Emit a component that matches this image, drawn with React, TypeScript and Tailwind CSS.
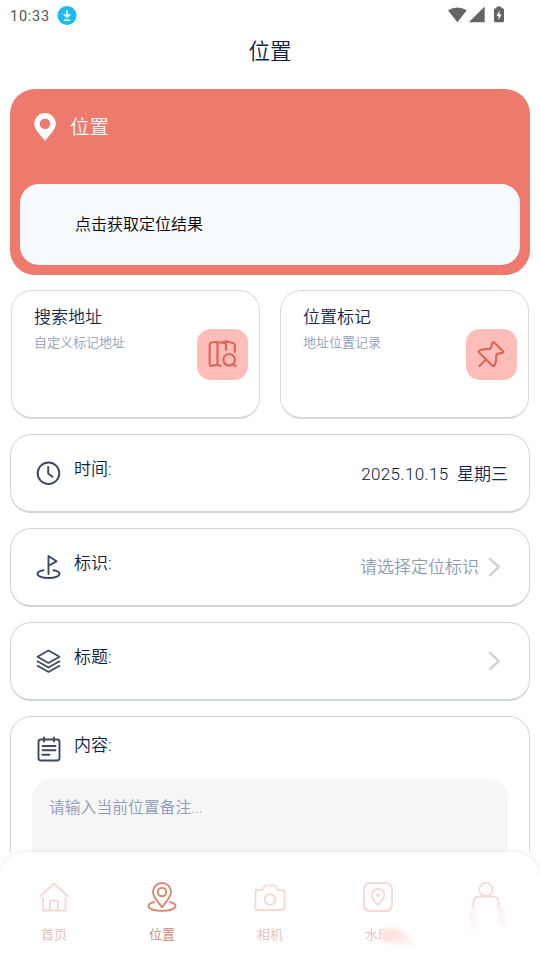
import type { ReactNode } from "react";

function StatusBar() {
  return (
    <div className="flex h-8 items-center justify-between pl-[10px] pr-[34px] text-[#545454]">
      <div className="flex items-center gap-[7px]">
        <span className="mt-[1px] font-['Roboto',sans-serif] text-[14.5px] font-normal leading-8 tracking-[0.750px]">
          10:33
        </span>
        <svg className="h-[20px] w-[20px]" viewBox="0 0 20 20" fill="none">
          <circle cx="10" cy="9.5" r="9.5" fill="#19baf5" />
          <path d="M10 4v7M6.700 8 10 11.300l3.300-3.300M6.800 14.200h6.400" stroke="#fff" strokeWidth="1.600" />
        </svg>
      </div>
      <svg className="-mt-[2px] h-[18px] w-[60px]" viewBox="0 0 60 18" fill="#646464">
        <path d="M2 4.300Q11.300-1.200 20.800 4.300L11.400 16.300Z" />
        <path d="M38.700.500v15.700H22.800Z" />
        <path
          fillRule="evenodd"
          d="M50.500.400h4.800v1.800h1.200q1.500 0 1.500 1.500v11.100q0 1.500-1.500 1.500h-7q-1.500 0-1.500-1.500V3.700q0-1.500 1.500-1.500h1Zm3 4-3 5.600h2v4l3-5.500h-2Z"
        />
      </svg>
    </div>
  );
}

interface FeatureProps {
  title: string;
  desc: string;
  icon: ReactNode;
}

function FeatureCard({ title, desc, icon }: FeatureProps) {
  return (
    <div className="flex h-[129px] w-[249px] justify-between rounded-[21px] border border-b-2 border-[#d6d9e0] pl-[22px] pr-[11px]">
      <div className="pt-[13px]">
        <p className="text-[17px] leading-[26px] text-[#14284c]">{title}</p>
        <p className="text-[13px] leading-[26px] text-[#8b9cba]">{desc}</p>
      </div>
      <div className="mt-[38px] flex h-[51px] w-[51px] items-center justify-center rounded-[14px] bg-[#ffbdb9]">
        {icon}
      </div>
    </div>
  );
}

interface RowProps {
  label: string;
  icon: ReactNode;
  children?: ReactNode;
}

function Row({ label, icon, children }: RowProps) {
  return (
    <div className="flex h-[79px] items-center rounded-[21px] border border-b-2 border-[#d0d4dc] pl-[24px] pr-[21px]">
      <div className="h-7 w-7">{icon}</div>
      <p className="mb-[9px] ml-[11px] flex-1 text-[17px] leading-6 text-[#0c1f42]">{label}</p>
      {children}
    </div>
  );
}

function Chevron() {
  return (
    <svg className="ml-[9px] mr-[7px] h-[20px] w-[13px]" viewBox="0 0 13 20" fill="none" stroke="#d2d2d2" strokeWidth="2.500" strokeLinecap="round" strokeLinejoin="round">
      <path d="m2 1.800 8.800 8.200L2 18.200" />
    </svg>
  );
}

const rowSvg = {
  className: "h-7 w-7",
  viewBox: "0 0 28 28",
  fill: "none",
  stroke: "#3c4962",
  strokeWidth: 1.9,
  strokeLinecap: "round",
  strokeLinejoin: "round",
} as const;

const tabSvg = {
  className: "h-8 w-8",
  viewBox: "0 0 32 32",
  fill: "none",
  stroke: "currentColor",
  strokeLinecap: "round",
  strokeLinejoin: "round",
} as const;

const tabs = [
  {
    name: "首页",
    active: false,
    icon: (
      <svg {...tabSvg} strokeWidth="1.800">
        <path d="M2 15.500 16 2.500l14 13M5 17v11.500q0 1 1 1h20.500q1 0 1-1V17M12 29V21q0-1.500 1.500-1.500h5q1.500 0 1.500 1.500v8" />
      </svg>
    ),
  },
  {
    name: "位置",
    active: true,
    icon: (
      <svg {...tabSvg} strokeWidth="1.900">
        <path d="M16 26.500C12 20.500 7 16.300 7 11a9 9 0 0 1 18 0c0 5.300-5 9.500-9 15.500Z" />
        <circle cx="16" cy="11" r="4.200" />
        <path d="M8 21c-3.500.900-5.500 2.200-5.500 3.900C2.500 27.800 8 29.900 16 29.900s13.500-2.100 13.500-5c0-1.700-2-3-5.500-3.900" />
      </svg>
    ),
  },
  {
    name: "相机",
    active: false,
    icon: (
      <svg {...tabSvg} strokeWidth="1.800">
        <path d="M3 9H7.500q1.200 0 1.600-1l1.100-2.700q.4-1 1.500-1h8.600q1.100 0 1.500 1L22.900 8q.4 1 1.600 1H29q1.500 0 1.500 1.500v17q0 1.500-1.500 1.500H3q-1.500 0-1.500-1.500v-17Q1.500 9 3 9Z" />
        <circle cx="16" cy="18.500" r="5.300" />
      </svg>
    ),
  },
  {
    name: "水印",
    active: false,
    icon: (
      <svg {...tabSvg} strokeWidth="1.800">
        <rect x="2" y="2" width="28" height="28" rx="6" />
        <path d="M16 24c-3-3.300-6.300-6.200-6.300-9.800a6.300 6.300 0 0 1 12.600 0C22.300 17.800 19 20.700 16 24Z" />
        <circle cx="16" cy="14.200" r="1" fill="currentColor" />
      </svg>
    ),
  },
  {
    name: "",
    active: false,
    icon: (
      <svg {...tabSvg} strokeWidth="1.800">
        <circle cx="16" cy="8.500" r="6.700" />
        <path d="M3.500 26v-4.500q0-6 6-6h13q6 0 6 6V26" />
      </svg>
    ),
  },
];

function TabBar() {
  return (
    <nav className="relative flex h-[108px] rounded-t-[26px] bg-white pt-[29px] shadow-[0_0_5px_rgba(0,0,0,0.09)]">
      {tabs.map((tab, i) => (
        <div
          key={i}
          className={`flex flex-1 flex-col items-center ${tab.active ? "text-[#d98672]" : "text-[#f3d8d3]"}`}
        >
          {tab.icon}
          <span className={`mt-[12px] text-[13px] leading-5 ${tab.active ? "text-[#cf7f70]" : "text-[#e9bcb5]"}`}>
            {tab.name}
          </span>
        </div>
      ))}
      {/* soft smudge over the right side of the bar */}
      <svg className="absolute left-[370px] top-[28px] h-[80px] w-[160px]" viewBox="0 0 160 80">
        <defs>
          <filter id="soft" x="-50%" y="-50%" width="200%" height="200%">
            <feGaussianBlur stdDeviation="2" />
          </filter>
          <linearGradient id="smudge" x1="0" x2="1" y1="0" y2="0.500">
            <stop offset="0" stopColor="#fbdad3" />
            <stop offset="1" stopColor="#fdf1ef" />
          </linearGradient>
          <linearGradient id="streak" x1="0" x2="0" y1="0" y2="1">
            <stop offset="0" stopColor="#f9eae7" />
            <stop offset="1" stopColor="#ffffff" />
          </linearGradient>
        </defs>
        <path d="M22 35 34 26v44H15V48Z" fill="#fff" filter="url(#soft)" />
        <path d="M12 50Q22 47 32 51L46 64Q30 66 12 61Z" fill="url(#smudge)" filter="url(#soft)" />
        <path d="M101 28h4v28h-5ZM128 28h5l2 20h-5Z" fill="url(#streak)" filter="url(#soft)" />
      </svg>
    </nav>
  );
}

export default function App() {
  return (
    <div className="flex h-[960px] w-[540px] flex-col overflow-hidden bg-white font-['Roboto','Noto_Sans_CJK_SC',sans-serif] font-[350]">
      <main className="h-[852px] overflow-hidden">
        <StatusBar />
        <h1 className="h-[57px] text-center text-[21.500px] leading-[40px] text-[#0c1f42]">位置</h1>

        <section className="mx-[10px] h-[186px] rounded-[25px] bg-[#ee796d] px-[10px] pt-[19px]">
          <div className="flex h-[38px] items-center pl-[14px]">
            <svg className="h-7 w-[22px]" viewBox="0 0 22 28" fill="#fff">
              <path fillRule="evenodd" d="M11 0a10.800 10.800 0 0 1 10.800 10.800C21.800 17 15 22.500 11 28 7 22.500.200 17 .200 10.800A10.800 10.800 0 0 1 11 0Zm0 5.400a5.300 5.300 0 1 0 0 10.600 5.300 5.300 0 0 0 0-10.600Z" />
            </svg>
            <span className="ml-[14px] mt-[2px] text-[19.500px] leading-[38px] text-white">位置</span>
          </div>
          <div className="mt-[38px] flex h-[81px] items-center rounded-[19px] bg-[#f6fafe] pl-[55px]">
            <span className="text-[16px] text-black">点击获取定位结果</span>
          </div>
        </section>

        <section className="mx-[11px] mt-[15px] flex justify-between">
          <FeatureCard
            title="搜索地址"
            desc="自定义标记地址"
            icon={
              <svg className="-mt-[2px] -ml-[1px] h-[30px] w-[30px]" viewBox="0 0 30 30" fill="none" stroke="#da6759" strokeWidth="2.200" strokeLinecap="round" strokeLinejoin="round">
                <path d="M13.500 26.800 9.500 25.800l-5 1q-1.800.300-1.800-1.500V5.500q0-1.500 1.500-2L9.500 3l9.500 1.500M10.500 3v22.500M19 11V2.500M14.500 3.500l4.500-1.300 7.500 2q1.300.300 1.300 1.600v7" />
                <circle cx="22.200" cy="20.800" r="5.800" />
                <path d="m26.500 25.200 2 2" />
              </svg>
            }
          />
          <FeatureCard
            title="位置标记"
            desc="地址位置记录"
            icon={
              <svg className="-ml-[1px] h-[30px] w-[30px]" viewBox="0 0 30 30" fill="none" stroke="#da6759" strokeWidth="2.200" strokeLinecap="round" strokeLinejoin="round">
                <path d="M18.500 2.700 27.300 11.500q.5 1-.8 1.300l-4.500.8q-2 .6-1.800 3 .4 4-1.500 8.500-1 1.800-2.500.4L3.200 12.500q-1.200-1.300.6-2 4.700-1.800 8.500-1.300 2.300.1 2.800-1.800l1.200-4.500q.8-1.600 2.200-.2ZM10 19.500 3.500 26" />
              </svg>
            }
          />
        </section>

        <section className="mx-[10px] mt-[15px] flex flex-col gap-[15px]">
          <Row
            label="时间:"
            icon={
              <svg {...rowSvg}>
                <circle cx="13.500" cy="14.300" r="10.800" />
                <path d="M13.200 8v6.500l4.300 3.300" />
              </svg>
            }
          >
            <p className="mt-[3px] whitespace-pre text-[17px] text-[#14284c]">
              <span className="tracking-[0.400px] text-[#021437]">2025.10.15</span>
              {"  "}星期三
            </p>
          </Row>
          <Row
            label="标识:"
            icon={
              <svg {...rowSvg}>
                <path d="M13.500 21V3l8 5.300-7.700 4.200M8.500 17.300c-4 .7-6 1.800-6 3.500 0 2.500 5 4.200 11 4.200s11-1.700 11-4.200c0-1.700-2-2.800-6-3.500" />
              </svg>
            }
          >
            <p className="mt-[2px] text-[17px] text-[#8b9cba]">请选择定位标识</p>
            <Chevron />
          </Row>
          <Row
            label="标题:"
            icon={
              <svg {...rowSvg} strokeWidth="1.700">
                <path d="m13.500 3.500 11 6.300-11 6.200-11-6.200ZM2.500 14.300l11 6.200 11-6.200M2.500 18.800l11 6.200 11-6.200" />
              </svg>
            }
          >
            <Chevron />
          </Row>

          <div className="h-[200px] rounded-[21px] border border-[#d0d4dc] px-[21px]">
            <div className="flex h-[62px] pl-[3px]">
              <svg {...rowSvg} className="mt-[18px] h-7 w-7">
                <rect x="3.500" y="4.500" width="21" height="21" rx="2.500" />
                <path d="M9 2.500v4M19 2.500v4M7.500 11h13M7.500 15.300h13M7.500 19.800h7" />
              </svg>
              <p className="ml-[11px] mt-[16px] text-[17px] leading-6 text-[#0c1f42]">内容:</p>
            </div>
            <div className="h-[120px] rounded-[20px] bg-[#f6f6f6] px-[17px] pt-[17px]">
              <p className="text-[15.800px] leading-6 text-[#8b9cba]">请输入当前位置备注...</p>
            </div>
          </div>
        </section>
      </main>
      <TabBar />
    </div>
  );
}
